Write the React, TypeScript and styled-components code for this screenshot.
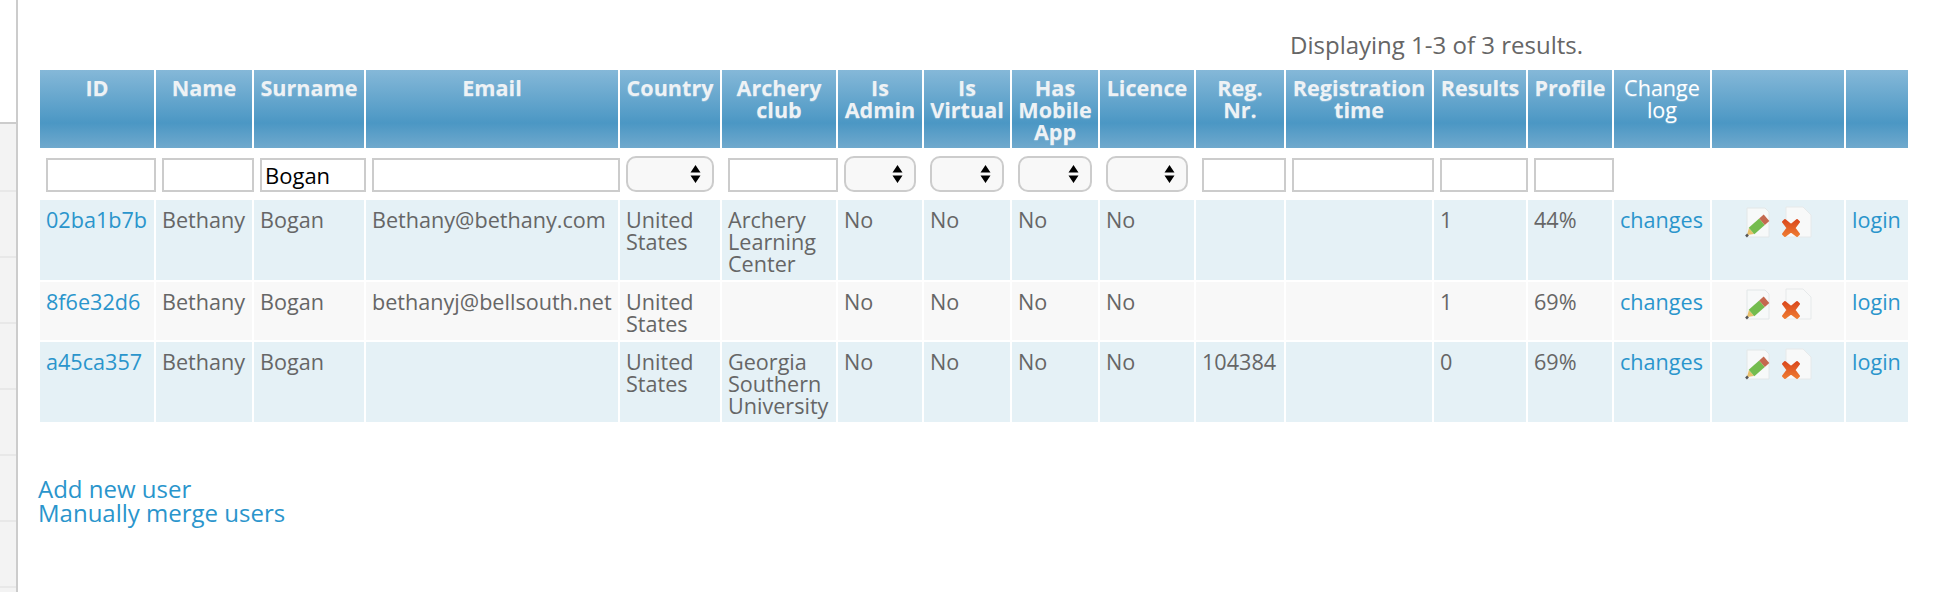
import React, { useId } from "react";
import styled, { createGlobalStyle } from "styled-components";

const Global = createGlobalStyle`
  html, body { margin: 0; padding: 0; background: #fff; }
  body { font-family: "Open Sans", "Liberation Sans", sans-serif; font-size: 21.6px; line-height: 22px; color: #666; }
`;

const Page = styled.div`
  display: flex;
  width: 1938px;
  height: 592px;
  overflow: hidden;
`;

const Sidebar = styled.aside`
  flex: 0 0 16px;
  padding-top: 122px;
  background: #fff;
  border-right: 2px solid #ccc;
`;

const SideItems = styled.div`
  height: 404px;
  padding-top: 66px;
  background: #f3f3f3;
  border-top: 2px solid #ccc;
`;

const SideItem = styled.div`
  height: 64px;
  border-top: 2px solid #e8e8e8;
`;

const Main = styled.main`
  flex: 1;
  padding: 34px 0 0 20px;
`;

const Summary = styled.div`
  width: 1545px;
  height: 34px;
  text-align: right;
  font-size: 24px;
`;

const Table = styled.table`
  table-layout: fixed;
  border-collapse: separate;
  border-spacing: 2px;
  width: 1872px;
`;

const HeadCell = styled.th<{ $plain?: boolean }>`
  padding: 7px 4px 5px;
  height: 66px;
  box-sizing: content-box;
  vertical-align: top;
  text-align: center;
  font-size: 21.6px;
  line-height: 22px;
  font-weight: ${(p) => (p.$plain ? 400 : 700)};
  color: ${(p) => (p.$plain ? "#ffffff" : "#eef2f5")};
  text-shadow: 0 1px 1px rgba(255, 255, 255, 0.25);
  background: linear-gradient(to bottom, #85b8d8 0%, #4b97c4 68%, #70a9cd 100%);
`;

const FilterCell = styled.td`
  padding: 6px;
  height: 36px;
  box-sizing: content-box;
  vertical-align: top;
`;

const FilterInput = styled.input`
  display: block;
  box-sizing: border-box;
  width: calc(100% + 8px);
  height: 34px;
  margin-top: 2px;
  padding: 0 3px;
  border: 2px solid #ccc;
  border-radius: 0;
  outline: none;
  background: #fff;
  color: #000;
  font-family: "Open Sans", sans-serif;
  font-size: 22px;
`;

const SelectWrap = styled.div`
  position: relative;
  width: 100%;
  height: 36px;
`;

const FilterSelect = styled.select`
  display: block;
  appearance: none;
  box-sizing: border-box;
  width: 100%;
  height: 36px;
  border: 2px solid #ccc;
  border-radius: 10px;
  background: #f8f8f8;
  outline: none;
`;

const SelectArrows = styled.svg`
  position: absolute;
  top: 9px;
  right: 13px;
  width: 11px;
  height: 18px;
  pointer-events: none;
`;

const Row = styled.tr<{ $odd: boolean }>`
  background: ${(p) => (p.$odd ? "#e5f1f6" : "#f8f8f8")};
`;

const Cell = styled.td`
  padding: 9px 6px 5px;
  vertical-align: top;
`;

const CellNoWrap = styled(Cell)`
  white-space: nowrap;
`;

const Link = styled.a`
  color: #2a95cc;
  text-decoration: none;
`;

const IconCell = styled(Cell)`
  padding: 6px 0 0 33px;
`;

const Icons = styled.div`
  display: flex;
  gap: 11px;
  align-items: flex-start;
`;

const IconSvg = styled.svg`
  display: block;
  filter: blur(0.7px);
`;

const Footer = styled.div`
  display: flex;
  flex-direction: column;
  margin-top: 53px;
  font-size: 24px;
  line-height: 24px;
`;

const widths = [114, 96, 110, 252, 100, 114, 84, 86, 86, 94, 88, 146, 92, 84, 96, 132, 62];

const headers: [string, boolean?][] = [
  ["ID"], ["Name"], ["Surname"], ["Email"], ["Country"], ["Archery club"],
  ["Is Admin"], ["Is Virtual"], ["Has Mobile App"], ["Licence"], ["Reg. Nr."],
  ["Registration time"], ["Results"], ["Profile"], ["Change log", true], [""], [""],
];

const filters: ("input" | "select" | "none")[] = [
  "input", "input", "input", "input", "select", "input", "select", "select", "select",
  "select", "input", "input", "input", "input", "none", "none", "none",
];

const rows = [
  { id: "02ba1b7b", email: "Bethany@bethany.com", club: "Archery Learning Center", reg: "", results: "1", profile: "44%" },
  { id: "8f6e32d6", email: "bethanyj@bellsouth.net", club: "", reg: "", results: "1", profile: "69%" },
  { id: "a45ca357", email: "", club: "Georgia Southern University", reg: "104384", results: "0", profile: "69%" },
];

const EditIcon = () => (
  <IconSvg width="26" height="32" viewBox="0 0 26 32">
    <path d="M2 2h18l4 4v25H2z" fill="#f7f9f9" stroke="#e2e7e8" />
    <path d="M2 29 L3.9 22 L9.1 28 Z" fill="#e8c06a" />
    <path d="M6.5 25 L17 15.8" stroke="#74bc4e" strokeWidth="8.5" fill="none" />
    <path d="M17 15.8 L21.5 11.8" stroke="#c4694f" strokeWidth="8.5" fill="none" />
    <path d="M1 30.5 L3 28.5" stroke="#555" strokeWidth="2.5" fill="none" />
  </IconSvg>
);

const DeleteIcon = () => {
  const id = useId();
  return (
    <IconSvg width="30" height="32" viewBox="0 0 30 32">
      <defs>
        <linearGradient id={id} gradientUnits="userSpaceOnUse" x1="0" y1="13" x2="0" y2="31">
          <stop offset="0" stopColor="#d9461c" />
          <stop offset="1" stopColor="#ef7d32" />
        </linearGradient>
      </defs>
      <path d="M4 1h17l8 8v22H4z" fill="#f8f9f9" stroke="#e6e9ea" />
      <path
        d="M1 16 L3 14 L9 19 L15 14 L17 16 L12.5 22 L17 28 L15 30 L9 25.5 L3 30 L1 28 L5.5 22 Z"
        fill={`url(#${id})`}
        stroke={`url(#${id})`}
        strokeWidth="2"
        strokeLinejoin="round"
      />
    </IconSvg>
  );
};

export default function App() {
  return (
    <Page>
      <Global />
      <Sidebar>
        <SideItems>
          {Array.from({ length: 7 }).map((_, i) => (
            <SideItem key={i} />
          ))}
        </SideItems>
      </Sidebar>
      <Main>
        <Summary>Displaying 1-3 of 3 results.</Summary>
        <Table>
          <colgroup>
            {widths.map((w, i) => (
              <col key={i} style={{ width: w }} />
            ))}
          </colgroup>
          <thead>
            <tr>
              {headers.map(([h, plain], i) => (
                <HeadCell key={i} $plain={plain}>{h}</HeadCell>
              ))}
            </tr>
            <tr>
              {filters.map((f, i) => (
                <FilterCell key={i}>
                  {f === "input" && <FilterInput defaultValue={i === 2 ? "Bogan" : ""} />}
                  {f === "select" && (
                    <SelectWrap>
                      <FilterSelect />
                      <SelectArrows viewBox="0 0 11 18">
                        <path d="M5.5 0 L10.5 7.5 H0.5 Z M5.5 18 L10.5 10.5 H0.5 Z" fill="#000" />
                      </SelectArrows>
                    </SelectWrap>
                  )}
                </FilterCell>
              ))}
            </tr>
          </thead>
          <tbody>
            {rows.map((r, i) => (
              <Row key={r.id} $odd={i % 2 === 0}>
                <CellNoWrap><Link href="#">{r.id}</Link></CellNoWrap>
                <Cell>Bethany</Cell>
                <Cell>Bogan</Cell>
                <CellNoWrap>{r.email}</CellNoWrap>
                <Cell>United States</Cell>
                <Cell>{r.club}</Cell>
                <Cell>No</Cell>
                <Cell>No</Cell>
                <Cell>No</Cell>
                <Cell>No</Cell>
                <Cell>{r.reg}</Cell>
                <Cell></Cell>
                <Cell>{r.results}</Cell>
                <Cell>{r.profile}</Cell>
                <CellNoWrap><Link href="#">changes</Link></CellNoWrap>
                <IconCell>
                  <Icons>
                    <EditIcon />
                    <DeleteIcon />
                  </Icons>
                </IconCell>
                <CellNoWrap><Link href="#">login</Link></CellNoWrap>
              </Row>
            ))}
          </tbody>
        </Table>
        <Footer>
          <Link href="#">Add new user</Link>
          <Link href="#">Manually merge users</Link>
        </Footer>
      </Main>
    </Page>
  );
}
